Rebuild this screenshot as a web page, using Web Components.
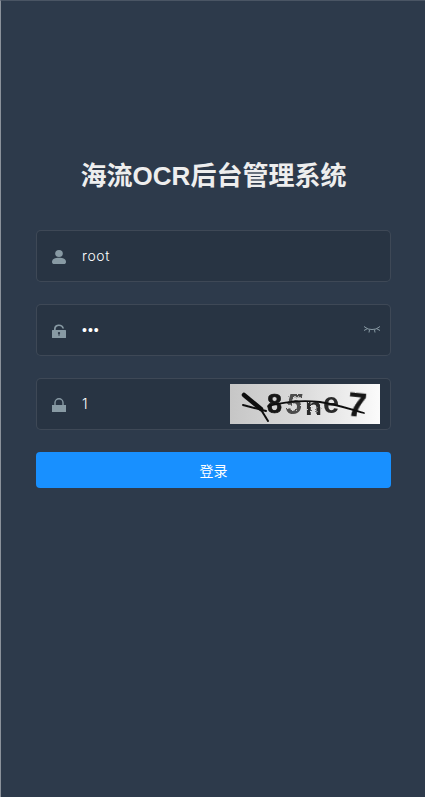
<!DOCTYPE html>
<html>
<head>
<meta charset="utf-8">
<title>login</title>
<style>
html,body{margin:0;padding:0;height:100%;background:#2d3a4b;}
</style>
</head>
<body>
<login-page></login-page>
<script>
//shared icons, drawn on a 14x14 box
const icons = {
  user: `<svg viewBox="0 0 14 14" width="14" height="14" fill="#889aa4"><ellipse cx="7" cy="3.500" rx="3.800" ry="3.500"/><path d="M0 12C0 9 3 7.800 7 7.800S14 9 14 12C14 13.400 13 14 12 14H2C1 14 0 13.400 0 12z"/></svg>`,
  openlock: `<svg viewBox="0 0 14 14" width="14" height="14" fill="#889aa4"><path d="M2 6V5C2 1.500 4.500 .4 7 .4S11.600 1.800 12 4.600H10.400C10 2.800 8.600 2 7 2S3.700 3 3.700 5V6z"/><path fill-rule="evenodd" d="M.6 6H13.400Q14 6 14 6.600V13.400Q14 14 13.400 14H.6Q0 14 0 13.400V6.600Q0 6 .6 6zM7 8A1.100 1.100 0 0 0 6.500 10.100V11.800H7.500V10.100A1.100 1.100 0 0 0 7 8z"/></svg>`,
  lock: `<svg viewBox="0 0 14 14" width="14" height="14" fill="#889aa4"><path d="M2.300 7V4.800a4.700 4.700 0 0 1 9.400 0V7H10.300V4.800a3.300 3.300 0 0 0-6.600 0V7z"/><rect y="7" width="14" height="7"/></svg>`,
  eye: `<svg viewBox="0 0 16 8" width="16" height="8" fill="none" stroke="#889aa4" stroke-width="1"><path d="M0 .5L4 3Q8 4 12 3L16 .5"/><path d="M0 4.500L3.500 2.600M16 4.500L12.500 2.600M5.500 3.700L5 6.500M10.500 3.700L11 6.500"/></svg>`
};

//one dark input row of the login form
class LoginField extends HTMLElement{
    constructor(){
        super();
        this.attachShadow({mode:"open"});
        this.shadowRoot.innerHTML = `
<style>
:host{
    display: flex;
    align-items: center;
    box-sizing: border-box;
    height: 52px;
    border: 1px solid rgba(255,255,255,.1);
    border-radius: 5px;
    background: rgba(0,0,0,.1);
    color: #fff;
    font: 300 14px Inter, "Noto Sans CJK SC", sans-serif;
}
#icon{
    display: flex;
    width: 14px;
    margin: 2px 0 0 15px;
}
#value{
    flex: 1;
    margin: 0 0 1px 16px;
    letter-spacing: .6px;
}
</style>
<span id="icon"></span>
<span id="value"><slot></slot></span>
<slot name="end"></slot>
`;
    }
    connectedCallback(){
        this.shadowRoot.querySelector("#icon").innerHTML = icons[this.getAttribute("icon")] || "";
    }
}

//captcha picture, the text stays real text and only gets roughed up by a filter
class CaptchaImage extends HTMLElement{
    constructor(){
        super();
        this.attachShadow({mode:"open"});
        this.shadowRoot.innerHTML = `
<style>
:host{display: block; width: 150px; height: 40px; margin-right: 10px;}
svg{display: block;}
</style>
<svg width="150" height="40" viewBox="0 0 150 40">
  <defs>
    <linearGradient id="bg" x1="0" x2="1" y1="0" y2="0">
      <stop offset="0" stop-color="#c6c6c6"/>
      <stop offset=".5" stop-color="#dcdcdc"/>
      <stop offset="1" stop-color="#fbfbfb"/>
    </linearGradient>
    <filter id="soft" x="-10%" y="-10%" width="120%" height="120%">
      <feTurbulence type="fractalNoise" baseFrequency=".25" numOctaves="2" seed="4"/>
      <feDisplacementMap in="SourceGraphic" scale="1.500"/>
      <feGaussianBlur stdDeviation=".6"/>
    </filter>
    <filter id="furry" x="-10%" y="-10%" width="120%" height="120%">
      <feTurbulence type="fractalNoise" baseFrequency=".8" numOctaves="1" seed="9"/>
      <feDisplacementMap in="SourceGraphic" scale="3.500"/>
      <feGaussianBlur stdDeviation=".6"/>
    </filter>
  </defs>
  <rect width="150" height="40" fill="url(#bg)"/>
  <g font-family="'Liberation Sans',sans-serif" font-weight="700" fill="#141414">
    <text filter="url(#soft)" x="37" y="29" font-size="27" stroke="#141414" stroke-width=".5">8</text>
    <g filter="url(#furry)">
      <text x="56" y="30" font-size="29" fill="#4c4c4c" font-style="italic">5</text>
      <text x="75" y="31" font-size="24" fill="#2c2c2c" textLength="17" lengthAdjust="spacingAndGlyphs">n</text>
    </g>
    <text filter="url(#soft)" x="93" y="29" font-size="29" fill="#2c2c2c">e</text>
    <text filter="url(#soft)" x="118" y="32" font-size="33" transform="rotate(6 125 20)" stroke="#141414" stroke-width=".5">7</text>
  </g>
  <g fill="none" stroke="#111" stroke-linecap="round" filter="url(#soft)">
    <path d="M14 11L31 25" stroke-width="4.500"/>
    <path d="M13 21L36 27M30 24L38 37" stroke-width="2"/>
    <path d="M38 22C58 17 75 16 90 18S120 25 134 29" stroke-width="1.800"/>
  </g>
</svg>
`;
    }
}

//blue submit bar
class LoginButton extends HTMLElement{
    constructor(){
        super();
        this.attachShadow({mode:"open"});
        this.shadowRoot.innerHTML = `
<style>
:host{
    display: flex;
    align-items: center;
    justify-content: center;
    height: 36px;
    border-radius: 4px;
    background: #1890ff;
    color: #fff;
    font: 14px Inter, "Noto Sans CJK SC", sans-serif;
}
</style>
<slot></slot>
`;
    }
}

//whole page
class LoginPage extends HTMLElement{
    constructor(){
        super();
        this.attachShadow({mode:"open"});
        this.shadowRoot.innerHTML = `
<style>
:host{
    display: block;
    box-sizing: border-box;
    height: 797px;
    padding: 160px 34px 0 35px;
    background: #2d3a4b;
    border-left: 1px solid #8b929b;
    border-top: 1px solid #4a5564;
    overflow: hidden;
}
h1{
    margin: 0 0 40px;
    height: 29px;
    font: bold 26px/31px "Liberation Sans", "Noto Sans CJK SC", sans-serif;
    color: #eee;
    text-align: center;
}
form{
    display: flex;
    flex-direction: column;
    gap: 22px;
}
.dots{
    font-family: "Liberation Sans", sans-serif;
    letter-spacing: 1px;
}
.eye{
    display: flex;
    margin: 0 10px 1px 0;
}
</style>
<h1>海流OCR后台管理系统</h1>
<form>
  <login-field icon="user">root</login-field>
  <login-field icon="openlock"><span class="dots">•••</span><span slot="end" class="eye">${icons.eye}</span></login-field>
  <login-field icon="lock">1<captcha-image slot="end"></captcha-image></login-field>
  <login-button>登录</login-button>
</form>
`;
    }
}

customElements.define("login-field", LoginField);
customElements.define("captcha-image", CaptchaImage);
customElements.define("login-button", LoginButton);
customElements.define("login-page", LoginPage);
</script>
</body>
</html>
